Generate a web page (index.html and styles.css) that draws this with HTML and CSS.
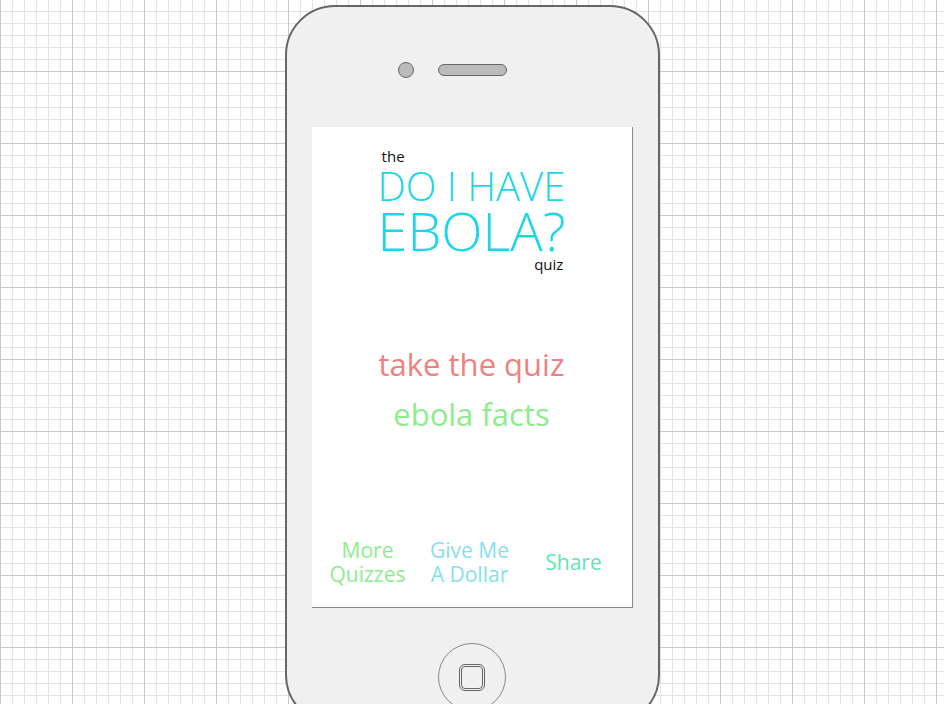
FILE: index.html
```html
<!DOCTYPE html>
<html lang="en">
<head>
<meta charset="utf-8">
<title>Do I Have Ebola? Quiz</title>
<link rel="stylesheet" href="styles.css">
</head>
<body>
<div class="phone">
  <div class="top-row">
    <span class="camera"></span>
    <span class="speaker"></span>
  </div>
  <main class="screen">
    <header class="title">
      <div class="title-the">the</div>
      <div class="title-line1">DO I HAVE</div>
      <div class="title-line2">EBOLA?</div>
      <div class="title-quiz">quiz</div>
    </header>
    <nav class="menu">
      <a class="menu-item menu-quiz" href="#">take the quiz</a>
      <a class="menu-item menu-facts" href="#">ebola facts</a>
    </nav>
    <footer class="bottom-nav">
      <a class="bottom-item bottom-more" href="#">More<br>Quizzes</a>
      <a class="bottom-item bottom-dollar" href="#">Give Me<br>A Dollar</a>
      <a class="bottom-item bottom-share" href="#">Share</a>
    </footer>
  </main>
  <div class="home-button"><span class="home-square"></span></div>
</div>
</body>
</html>
```
FILE: styles.css
```css
html, body {
  margin: 0;
  padding: 0;
}
body {
  width: 944px;
  height: 704px;
  overflow: hidden;
  background-color: #ffffff;
  background-image:
    linear-gradient(to right, #c8c8c8 1px, transparent 1px),
    linear-gradient(to bottom, #c8c8c8 1px, transparent 1px),
    linear-gradient(to right, #e3e3e3 1px, transparent 1px),
    linear-gradient(to bottom, #e3e3e3 1px, transparent 1px);
  background-size: 72px 72px, 72px 72px, 12px 12px, 12px 12px;
  background-position: 0 0, 0 -1px, 0 0, 0 -1px;
  font-family: "Open Sans", "DejaVu Sans", sans-serif;
}
.phone {
  box-sizing: border-box;
  width: 375px;
  height: 720px;
  margin: 5px auto 0;
  border: 2px solid #666666;
  border-radius: 50px;
  background: #f0f0f0;
  display: flex;
  flex-direction: column;
  align-items: center;
}
.top-row {
  width: 100%;
  margin-top: 55px;
  display: grid;
  grid-template-columns: 1fr auto 1fr;
  align-items: center;
}
.camera {
  justify-self: end;
  margin-right: 24px;
  box-sizing: border-box;
  width: 16px;
  height: 16px;
  border: 1px solid #666666;
  border-radius: 50%;
  background: #bbbbbb;
}
.speaker {
  box-sizing: border-box;
  width: 69px;
  height: 12px;
  border: 1px solid #666666;
  border-radius: 6px;
  background: #bbbbbb;
}
.screen {
  box-sizing: border-box;
  width: 321px;
  height: 481px;
  margin-top: 49px;
  background: #ffffff;
  border-right: 1px solid #8a8a8a;
  border-bottom: 1px solid #8a8a8a;
  display: flex;
  flex-direction: column;
  align-items: center;
  padding-top: 19px;
}
.title {
  display: flex;
  flex-direction: column;
  font-weight: 300;
  color: #1ad6e8;
}
.title-the {
  align-self: flex-start;
  padding-left: 4px;
  font-size: 15px;
  line-height: 20px;
  color: #111111;
  font-weight: 400;
}
.title-line1 {
  font-size: 40px;
  line-height: 40px;
  white-space: nowrap;
}
.title-line2 {
  font-size: 54px;
  line-height: 49px;
  white-space: nowrap;
}
.title-quiz {
  align-self: flex-end;
  padding-right: 2px;
  font-size: 15px;
  line-height: 18px;
  color: #111111;
  font-weight: 400;
}
.menu {
  margin-top: 66px;
  display: flex;
  flex-direction: column;
  align-items: center;
}
.menu-item {
  font-size: 31px;
  line-height: 50px;
  font-weight: 400;
  text-decoration: none;
}
.menu-quiz { color: #f08080; }
.menu-facts { color: #8eec8e; }
.bottom-nav {
  margin-top: auto;
  width: 100%;
  padding-bottom: 21px;
  display: grid;
  grid-template-columns: 112px 92px 1fr;
  align-items: center;
}
.bottom-item {
  text-align: center;
  font-size: 21px;
  line-height: 24px;
  font-weight: 400;
  text-decoration: none;
  white-space: nowrap;
}
.bottom-more { color: #8eec8e; }
.bottom-dollar { color: #86def2; }
.bottom-share { color: #5fe6b4; }
.home-button {
  box-sizing: border-box;
  width: 68px;
  height: 68px;
  margin-top: 35px;
  border: 1px solid #888888;
  border-radius: 50%;
  display: flex;
  align-items: center;
  justify-content: center;
}
.home-square {
  box-sizing: border-box;
  width: 26px;
  height: 27px;
  border: 3px double #666666;
  border-radius: 6px;
}
```
